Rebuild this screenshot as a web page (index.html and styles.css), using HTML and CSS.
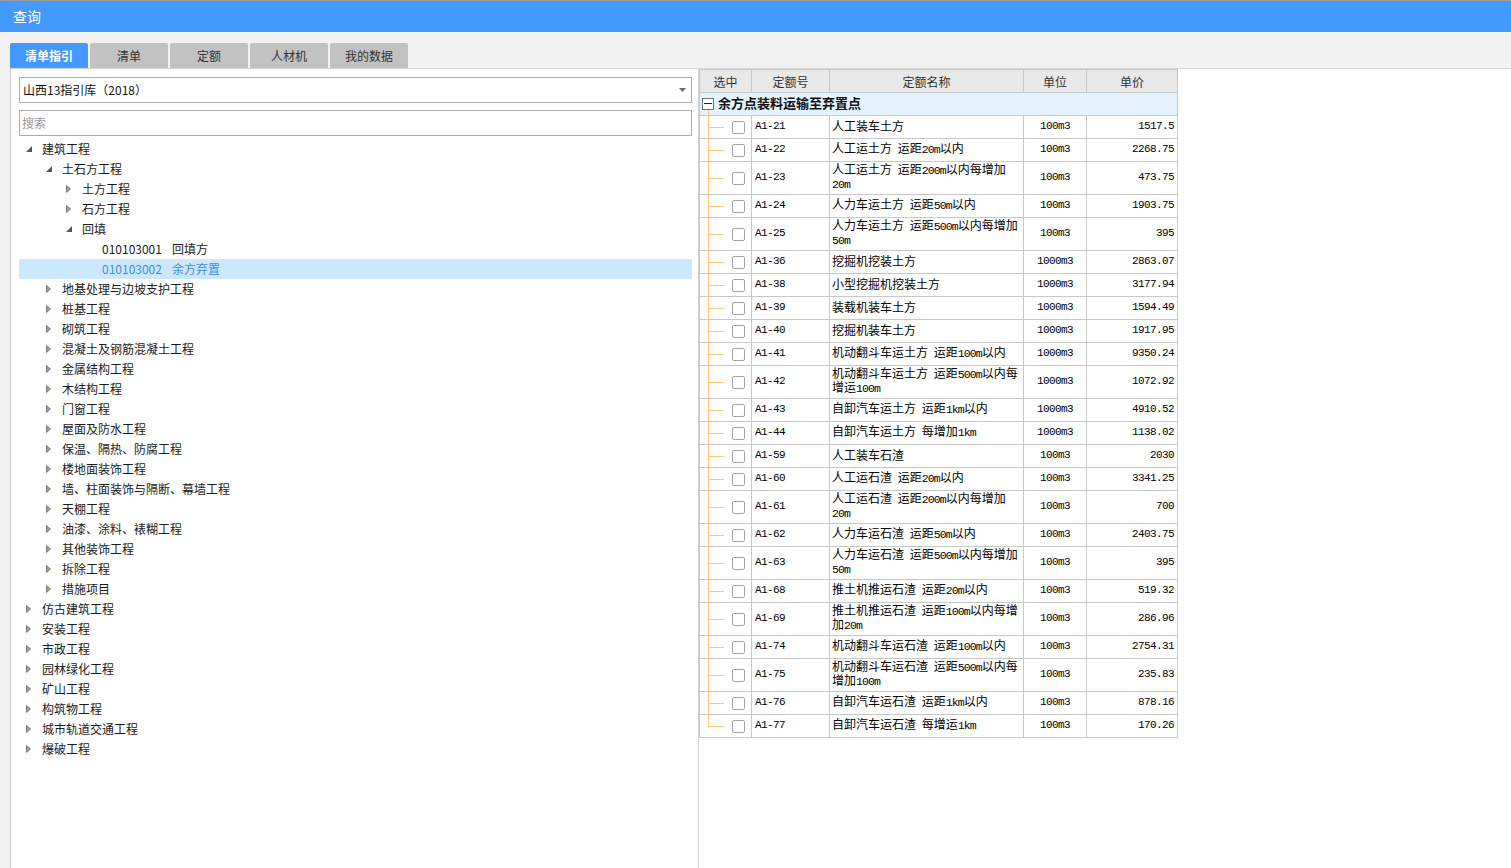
FILE: index.html
```html
<!DOCTYPE html>
<html lang="zh-CN">
<head>
<meta charset="utf-8">
<title>查询</title>
<link rel="stylesheet" href="styles.css">
</head>
<body>
<div class="window">
  <div class="titlebar">查询</div>
  <div class="tabs">
    <div class="tab active">清单指引</div>
    <div class="tab">清单</div>
    <div class="tab">定额</div>
    <div class="tab">人材机</div>
    <div class="tab">我的数据</div>
  </div>
  <div class="content">
    <div class="left-pane">
      <div class="select"><span>山西13指引库（2018）</span><svg class="drop" width="7" height="4" viewBox="0 0 7 4"><path d="M0 0H7L3.5 4Z" fill="#6e6e6e"/></svg></div>
      <div class="search">搜索</div>
      <ul class="tree">
        <li class="node lv0"><span class="tog"><svg width="6" height="6" viewBox="0 0 6 6"><path d="M6 0V6H0Z" fill="#595959"/></svg></span><span class="label">建筑工程</span></li>
        <li class="node lv1"><span class="tog"><svg width="6" height="6" viewBox="0 0 6 6"><path d="M6 0V6H0Z" fill="#595959"/></svg></span><span class="label">土石方工程</span></li>
        <li class="node lv2"><span class="tog"><svg class="closed" width="5" height="8" viewBox="0 0 5 8"><path d="M0.5 0.5L4.5 4L0.5 7.5Z" fill="#a0a0a0" stroke="#7c7c7c"/></svg></span><span class="label">土方工程</span></li>
        <li class="node lv2"><span class="tog"><svg class="closed" width="5" height="8" viewBox="0 0 5 8"><path d="M0.5 0.5L4.5 4L0.5 7.5Z" fill="#a0a0a0" stroke="#7c7c7c"/></svg></span><span class="label">石方工程</span></li>
        <li class="node lv2"><span class="tog"><svg width="6" height="6" viewBox="0 0 6 6"><path d="M6 0V6H0Z" fill="#595959"/></svg></span><span class="label">回填</span></li>
        <li class="node lv3"><span class="tog"></span><span class="label"><span class="code">010103001</span>回填方</span></li>
        <li class="node lv3 selected"><span class="tog"></span><span class="label"><span class="code">010103002</span>余方弃置</span></li>
        <li class="node lv1"><span class="tog"><svg class="closed" width="5" height="8" viewBox="0 0 5 8"><path d="M0.5 0.5L4.5 4L0.5 7.5Z" fill="#a0a0a0" stroke="#7c7c7c"/></svg></span><span class="label">地基处理与边坡支护工程</span></li>
        <li class="node lv1"><span class="tog"><svg class="closed" width="5" height="8" viewBox="0 0 5 8"><path d="M0.5 0.5L4.5 4L0.5 7.5Z" fill="#a0a0a0" stroke="#7c7c7c"/></svg></span><span class="label">桩基工程</span></li>
        <li class="node lv1"><span class="tog"><svg class="closed" width="5" height="8" viewBox="0 0 5 8"><path d="M0.5 0.5L4.5 4L0.5 7.5Z" fill="#a0a0a0" stroke="#7c7c7c"/></svg></span><span class="label">砌筑工程</span></li>
        <li class="node lv1"><span class="tog"><svg class="closed" width="5" height="8" viewBox="0 0 5 8"><path d="M0.5 0.5L4.5 4L0.5 7.5Z" fill="#a0a0a0" stroke="#7c7c7c"/></svg></span><span class="label">混凝土及钢筋混凝土工程</span></li>
        <li class="node lv1"><span class="tog"><svg class="closed" width="5" height="8" viewBox="0 0 5 8"><path d="M0.5 0.5L4.5 4L0.5 7.5Z" fill="#a0a0a0" stroke="#7c7c7c"/></svg></span><span class="label">金属结构工程</span></li>
        <li class="node lv1"><span class="tog"><svg class="closed" width="5" height="8" viewBox="0 0 5 8"><path d="M0.5 0.5L4.5 4L0.5 7.5Z" fill="#a0a0a0" stroke="#7c7c7c"/></svg></span><span class="label">木结构工程</span></li>
        <li class="node lv1"><span class="tog"><svg class="closed" width="5" height="8" viewBox="0 0 5 8"><path d="M0.5 0.5L4.5 4L0.5 7.5Z" fill="#a0a0a0" stroke="#7c7c7c"/></svg></span><span class="label">门窗工程</span></li>
        <li class="node lv1"><span class="tog"><svg class="closed" width="5" height="8" viewBox="0 0 5 8"><path d="M0.5 0.5L4.5 4L0.5 7.5Z" fill="#a0a0a0" stroke="#7c7c7c"/></svg></span><span class="label">屋面及防水工程</span></li>
        <li class="node lv1"><span class="tog"><svg class="closed" width="5" height="8" viewBox="0 0 5 8"><path d="M0.5 0.5L4.5 4L0.5 7.5Z" fill="#a0a0a0" stroke="#7c7c7c"/></svg></span><span class="label">保温、隔热、防腐工程</span></li>
        <li class="node lv1"><span class="tog"><svg class="closed" width="5" height="8" viewBox="0 0 5 8"><path d="M0.5 0.5L4.5 4L0.5 7.5Z" fill="#a0a0a0" stroke="#7c7c7c"/></svg></span><span class="label">楼地面装饰工程</span></li>
        <li class="node lv1"><span class="tog"><svg class="closed" width="5" height="8" viewBox="0 0 5 8"><path d="M0.5 0.5L4.5 4L0.5 7.5Z" fill="#a0a0a0" stroke="#7c7c7c"/></svg></span><span class="label">墙、柱面装饰与隔断、幕墙工程</span></li>
        <li class="node lv1"><span class="tog"><svg class="closed" width="5" height="8" viewBox="0 0 5 8"><path d="M0.5 0.5L4.5 4L0.5 7.5Z" fill="#a0a0a0" stroke="#7c7c7c"/></svg></span><span class="label">天棚工程</span></li>
        <li class="node lv1"><span class="tog"><svg class="closed" width="5" height="8" viewBox="0 0 5 8"><path d="M0.5 0.5L4.5 4L0.5 7.5Z" fill="#a0a0a0" stroke="#7c7c7c"/></svg></span><span class="label">油漆、涂料、裱糊工程</span></li>
        <li class="node lv1"><span class="tog"><svg class="closed" width="5" height="8" viewBox="0 0 5 8"><path d="M0.5 0.5L4.5 4L0.5 7.5Z" fill="#a0a0a0" stroke="#7c7c7c"/></svg></span><span class="label">其他装饰工程</span></li>
        <li class="node lv1"><span class="tog"><svg class="closed" width="5" height="8" viewBox="0 0 5 8"><path d="M0.5 0.5L4.5 4L0.5 7.5Z" fill="#a0a0a0" stroke="#7c7c7c"/></svg></span><span class="label">拆除工程</span></li>
        <li class="node lv1"><span class="tog"><svg class="closed" width="5" height="8" viewBox="0 0 5 8"><path d="M0.5 0.5L4.5 4L0.5 7.5Z" fill="#a0a0a0" stroke="#7c7c7c"/></svg></span><span class="label">措施项目</span></li>
        <li class="node lv0"><span class="tog"><svg class="closed" width="5" height="8" viewBox="0 0 5 8"><path d="M0.5 0.5L4.5 4L0.5 7.5Z" fill="#a0a0a0" stroke="#7c7c7c"/></svg></span><span class="label">仿古建筑工程</span></li>
        <li class="node lv0"><span class="tog"><svg class="closed" width="5" height="8" viewBox="0 0 5 8"><path d="M0.5 0.5L4.5 4L0.5 7.5Z" fill="#a0a0a0" stroke="#7c7c7c"/></svg></span><span class="label">安装工程</span></li>
        <li class="node lv0"><span class="tog"><svg class="closed" width="5" height="8" viewBox="0 0 5 8"><path d="M0.5 0.5L4.5 4L0.5 7.5Z" fill="#a0a0a0" stroke="#7c7c7c"/></svg></span><span class="label">市政工程</span></li>
        <li class="node lv0"><span class="tog"><svg class="closed" width="5" height="8" viewBox="0 0 5 8"><path d="M0.5 0.5L4.5 4L0.5 7.5Z" fill="#a0a0a0" stroke="#7c7c7c"/></svg></span><span class="label">园林绿化工程</span></li>
        <li class="node lv0"><span class="tog"><svg class="closed" width="5" height="8" viewBox="0 0 5 8"><path d="M0.5 0.5L4.5 4L0.5 7.5Z" fill="#a0a0a0" stroke="#7c7c7c"/></svg></span><span class="label">矿山工程</span></li>
        <li class="node lv0"><span class="tog"><svg class="closed" width="5" height="8" viewBox="0 0 5 8"><path d="M0.5 0.5L4.5 4L0.5 7.5Z" fill="#a0a0a0" stroke="#7c7c7c"/></svg></span><span class="label">构筑物工程</span></li>
        <li class="node lv0"><span class="tog"><svg class="closed" width="5" height="8" viewBox="0 0 5 8"><path d="M0.5 0.5L4.5 4L0.5 7.5Z" fill="#a0a0a0" stroke="#7c7c7c"/></svg></span><span class="label">城市轨道交通工程</span></li>
        <li class="node lv0"><span class="tog"><svg class="closed" width="5" height="8" viewBox="0 0 5 8"><path d="M0.5 0.5L4.5 4L0.5 7.5Z" fill="#a0a0a0" stroke="#7c7c7c"/></svg></span><span class="label">爆破工程</span></li>
      </ul>
    </div>
    <div class="right-pane">
      <table class="grid">
        <colgroup><col class="c-sel"><col class="c-code"><col class="c-name"><col class="c-unit"><col class="c-price"></colgroup>
        <thead>
          <tr><th>选中</th><th>定额号</th><th>定额名称</th><th>单位</th><th>单价</th></tr>
        </thead>
        <tbody>
          <tr class="group"><td colspan="5"><div class="group-head"><span class="minus"></span><span class="group-title">余方点装料运输至弃置点</span></div></td></tr>
          <tr><td class="sel"><span class="chk"></span></td><td class="mono">A1-21</td><td class="name">人工装车土方</td><td class="mono unit">100m3</td><td class="mono price">1517.5</td></tr>
          <tr><td class="sel"><span class="chk"></span></td><td class="mono">A1-22</td><td class="name">人工运土方 运距<span class="a">20m</span>以内</td><td class="mono unit">100m3</td><td class="mono price">2268.75</td></tr>
          <tr class="tall"><td class="sel"><span class="chk"></span></td><td class="mono">A1-23</td><td class="name">人工运土方 运距<span class="a">200m</span>以内每增加<span class="a">20m</span></td><td class="mono unit">100m3</td><td class="mono price">473.75</td></tr>
          <tr><td class="sel"><span class="chk"></span></td><td class="mono">A1-24</td><td class="name">人力车运土方 运距<span class="a">50m</span>以内</td><td class="mono unit">100m3</td><td class="mono price">1903.75</td></tr>
          <tr class="tall"><td class="sel"><span class="chk"></span></td><td class="mono">A1-25</td><td class="name">人力车运土方 运距<span class="a">500m</span>以内每增加<span class="a">50m</span></td><td class="mono unit">100m3</td><td class="mono price">395</td></tr>
          <tr><td class="sel"><span class="chk"></span></td><td class="mono">A1-36</td><td class="name">挖掘机挖装土方</td><td class="mono unit">1000m3</td><td class="mono price">2863.07</td></tr>
          <tr><td class="sel"><span class="chk"></span></td><td class="mono">A1-38</td><td class="name">小型挖掘机挖装土方</td><td class="mono unit">1000m3</td><td class="mono price">3177.94</td></tr>
          <tr><td class="sel"><span class="chk"></span></td><td class="mono">A1-39</td><td class="name">装载机装车土方</td><td class="mono unit">1000m3</td><td class="mono price">1594.49</td></tr>
          <tr><td class="sel"><span class="chk"></span></td><td class="mono">A1-40</td><td class="name">挖掘机装车土方</td><td class="mono unit">1000m3</td><td class="mono price">1917.95</td></tr>
          <tr><td class="sel"><span class="chk"></span></td><td class="mono">A1-41</td><td class="name">机动翻斗车运土方 运距<span class="a">100m</span>以内</td><td class="mono unit">1000m3</td><td class="mono price">9350.24</td></tr>
          <tr class="tall"><td class="sel"><span class="chk"></span></td><td class="mono">A1-42</td><td class="name">机动翻斗车运土方 运距<span class="a">500m</span>以内每增运<span class="a">100m</span></td><td class="mono unit">1000m3</td><td class="mono price">1072.92</td></tr>
          <tr><td class="sel"><span class="chk"></span></td><td class="mono">A1-43</td><td class="name">自卸汽车运土方 运距<span class="a">1km</span>以内</td><td class="mono unit">1000m3</td><td class="mono price">4910.52</td></tr>
          <tr><td class="sel"><span class="chk"></span></td><td class="mono">A1-44</td><td class="name">自卸汽车运土方 每增加<span class="a">1km</span></td><td class="mono unit">1000m3</td><td class="mono price">1138.02</td></tr>
          <tr><td class="sel"><span class="chk"></span></td><td class="mono">A1-59</td><td class="name">人工装车石渣</td><td class="mono unit">100m3</td><td class="mono price">2030</td></tr>
          <tr><td class="sel"><span class="chk"></span></td><td class="mono">A1-60</td><td class="name">人工运石渣 运距<span class="a">20m</span>以内</td><td class="mono unit">100m3</td><td class="mono price">3341.25</td></tr>
          <tr class="tall"><td class="sel"><span class="chk"></span></td><td class="mono">A1-61</td><td class="name">人工运石渣 运距<span class="a">200m</span>以内每增加<span class="a">20m</span></td><td class="mono unit">100m3</td><td class="mono price">700</td></tr>
          <tr><td class="sel"><span class="chk"></span></td><td class="mono">A1-62</td><td class="name">人力车运石渣 运距<span class="a">50m</span>以内</td><td class="mono unit">100m3</td><td class="mono price">2403.75</td></tr>
          <tr class="tall"><td class="sel"><span class="chk"></span></td><td class="mono">A1-63</td><td class="name">人力车运石渣 运距<span class="a">500m</span>以内每增加<span class="a">50m</span></td><td class="mono unit">100m3</td><td class="mono price">395</td></tr>
          <tr><td class="sel"><span class="chk"></span></td><td class="mono">A1-68</td><td class="name">推土机推运石渣 运距<span class="a">20m</span>以内</td><td class="mono unit">100m3</td><td class="mono price">519.32</td></tr>
          <tr class="tall"><td class="sel"><span class="chk"></span></td><td class="mono">A1-69</td><td class="name">推土机推运石渣 运距<span class="a">100m</span>以内每增加<span class="a">20m</span></td><td class="mono unit">100m3</td><td class="mono price">286.96</td></tr>
          <tr><td class="sel"><span class="chk"></span></td><td class="mono">A1-74</td><td class="name">机动翻斗车运石渣 运距<span class="a">100m</span>以内</td><td class="mono unit">100m3</td><td class="mono price">2754.31</td></tr>
          <tr class="tall"><td class="sel"><span class="chk"></span></td><td class="mono">A1-75</td><td class="name">机动翻斗车运石渣 运距<span class="a">500m</span>以内每增加<span class="a">100m</span></td><td class="mono unit">100m3</td><td class="mono price">235.83</td></tr>
          <tr><td class="sel"><span class="chk"></span></td><td class="mono">A1-76</td><td class="name">自卸汽车运石渣 运距<span class="a">1km</span>以内</td><td class="mono unit">100m3</td><td class="mono price">878.16</td></tr>
          <tr><td class="sel last"><span class="chk"></span></td><td class="mono">A1-77</td><td class="name">自卸汽车运石渣 每增运<span class="a">1km</span></td><td class="mono unit">100m3</td><td class="mono price">170.26</td></tr>
        </tbody>
      </table>
    </div>
  </div>
</div>
</body>
</html>
```

FILE: styles.css
```css
* {
  box-sizing: border-box;
}

html,
body {
  margin: 0;
  padding: 0;
}

body {
  background: #f2f2f2;
  font-family: "Noto Sans CJK SC", "Noto Sans", sans-serif;
  font-size: 12px;
  color: #000;
  overflow: hidden;
}

.window {
  display: flex;
  flex-direction: column;
  height: 868px;
}

.titlebar {
  flex: none;
  height: 32px;
  border-top: 1px solid #9e9e9e;
  background: #4499ff;
  color: #fff;
  font-size: 14px;
  line-height: 30px;
  padding-left: 13px;
}

.tabs {
  flex: none;
  display: flex;
  align-items: flex-end;
  gap: 2px;
  height: 36px;
  padding: 0 0 0 10px;
}

.tab {
  width: 78px;
  height: 25px;
  background: #c2c2c2;
  color: #333;
  border-radius: 2px 2px 0 0;
  display: flex;
  align-items: center;
  justify-content: center;
  font-size: 12px;
}

.tab.active {
  background: #4499ff;
  color: #fff;
  font-weight: bold;
}

.content {
  flex: 1;
  min-height: 0;
  display: flex;
  margin-left: 10px;
  background: #fff;
  border-top: 1px solid #d4d4d4;
  border-left: 1px solid #c4c4c4;
}

.left-pane {
  flex: none;
  width: 688px;
  border-right: 1px solid #d2d2d2;
  padding: 8px 6px 0 8px;
}

.select {
  height: 26px;
  border: 1px solid #ababab;
  display: flex;
  align-items: center;
  padding-left: 3px;
  padding-bottom: 1px;
  color: #111;
}

.drop {
  margin-left: auto;
  margin-right: 5px;
}

.search {
  height: 26px;
  margin-top: 7px;
  border: 1px solid #ababab;
  padding-left: 2px;
  line-height: 23px;
  color: #9a9a9a;
}

.tree {
  list-style: none;
  margin: 3px 0 0;
  padding: 0;
}

.node {
  display: flex;
  align-items: center;
  height: 20px;
  padding-left: 3px;
  color: #1a1a1a;
  white-space: nowrap;
}

.node.lv1 { padding-left: 23px; }
.node.lv2 { padding-left: 43px; }
.node.lv3 { padding-left: 63px; }

.label {
  line-height: 19px;
  padding-bottom: 1px;
}

.tog {
  flex: none;
  width: 20px;
  height: 20px;
  display: flex;
  align-items: center;
  padding-left: 4px;
}

.code {
  margin-right: 10px;
}

.node.selected {
  background: #cce8ff;
  color: #3a8ee6;
}

.right-pane {
  flex: 1;
}

.grid {
  border-collapse: collapse;
  table-layout: fixed;
  width: 479px;
}

.c-sel { width: 52px; }
.c-code { width: 78px; }
.c-name { width: 194px; }
.c-unit { width: 63px; }
.c-price { width: 91px; }

.grid th,
.grid td {
  border: 1px solid #c8c8c8;
  padding: 0;
  vertical-align: middle;
}

.grid tbody td {
  padding-bottom: 2px;
}

.grid thead tr {
  height: 23px;
}

.grid th {
  background: #e8e8e8;
  font-weight: normal;
  color: #333;
  font-size: 12px;
}

.grid tbody tr {
  height: 23px;
}

.grid tbody tr.tall {
  height: 33px;
}

.grid tbody .group td {
  background: #e5f3ff linear-gradient(#ffc870, #ffc870) 8px 100% / 1px 5px no-repeat;
  padding: 0 0 0 2px;
}

.group-head {
  display: flex;
  align-items: center;
  height: 22px;
  color: #111;
  white-space: nowrap;
}

.group-title {
  font-weight: bold;
  font-size: 13px;
  line-height: 18px;
  padding-bottom: 3px;
}

.minus {
  flex: none;
  display: flex;
  align-items: center;
  justify-content: center;
  width: 12px;
  height: 12px;
  border: 1px solid #747474;
  background: #fff;
  margin-right: 4px;
  margin-top: -1px;
}

.minus::before {
  content: "";
  width: 8px;
  height: 1px;
  background: #222;
}

.grid tbody .sel {
  padding: 0 0 0 32px;
  background:
    linear-gradient(#ffc870, #ffc870) 8px 0 / 1px 100% no-repeat,
    linear-gradient(#ffc870, #ffc870) 8px 50% / 16px 1px no-repeat;
}

.grid tbody .sel.last {
  background:
    linear-gradient(#ffc870, #ffc870) 8px 0 / 1px 50% no-repeat,
    linear-gradient(#ffc870, #ffc870) 8px 50% / 16px 1px no-repeat;
}

.chk {
  display: block;
  width: 13px;
  height: 13px;
  border: 1px solid #a3a3a3;
  border-radius: 2px;
  background: #fff;
}

.mono,
.a {
  font-family: "Liberation Mono", "DejaVu Sans Mono", monospace;
  font-size: 11px;
  letter-spacing: -0.6px;
}

.a {
  font-size: 11.5px;
  letter-spacing: -0.9px;
}

.grid tbody .mono {
  padding-left: 3px;
}

.grid tbody .name {
  padding-left: 2px;
  padding-right: 2px;
  line-height: 12px;
  word-spacing: 3px;
}

.grid tbody .unit {
  text-align: center;
  padding-left: 0;
}

.grid tbody .price {
  text-align: right;
  padding-left: 0;
  padding-right: 3px;
}
```
